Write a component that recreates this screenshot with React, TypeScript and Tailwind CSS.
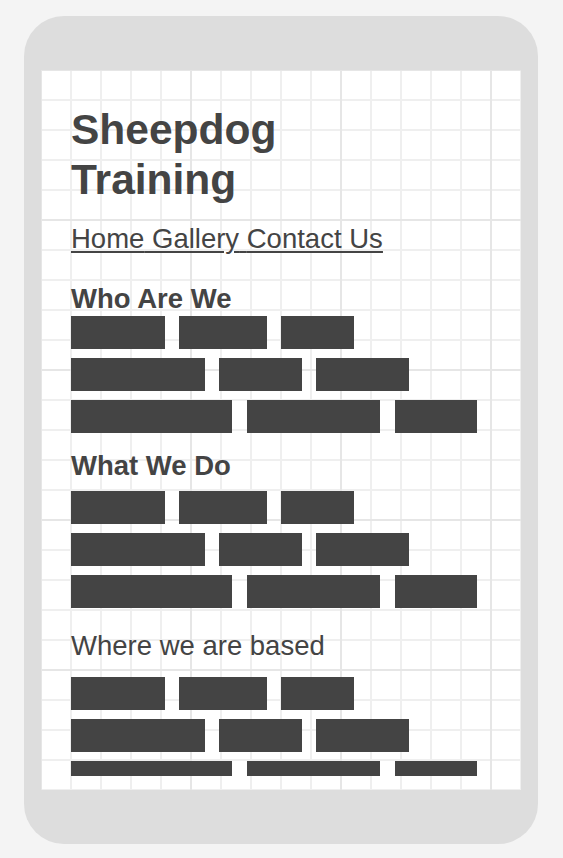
import React from 'react';

// widths of the placeholder "text" blocks, one array per line
const paragraph = [
  { widths: [94, 88, 73], gap: 'gap-[14px]' },
  { widths: [134, 83, 93], gap: 'gap-[14px]' },
  { widths: [161, 133, 82], gap: 'gap-[15px]' },
];

const Bars: React.FC<{ lastHeight?: number }> = ({ lastHeight }) => (
  <div className="flex flex-col gap-[9px]">
    {paragraph.map((row, i) => (
      <div key={i} className={`flex ${row.gap}`}>
        {row.widths.map((w, j) => (
          <div
            key={j}
            className="bg-[#444444]"
            style={{ width: w, height: i === 2 && lastHeight ? lastHeight : 33 }}
          />
        ))}
      </div>
    ))}
  </div>
);

const App: React.FC = () => {
  return (
    <div className="min-h-[858px] w-full bg-[#f4f4f4] pt-4 pl-6 font-['Liberation_Sans',Arial,sans-serif] text-[#444444]">
      <div className="w-[514px] h-[828px] rounded-[40px] bg-[#dddddd] px-[17px] py-[54px]">
        <div className="h-[720px] w-[480px] overflow-hidden bg-white bg-[linear-gradient(to_right,#e6e6e6_1px,transparent_1px,transparent_149px,#e6e6e6_149px),linear-gradient(to_bottom,#e6e6e6_1px,transparent_1px,transparent_149px,#e6e6e6_149px),linear-gradient(to_right,#efefef_1px,transparent_1px,transparent_29px,#efefef_29px),linear-gradient(to_bottom,#efefef_1px,transparent_1px,transparent_29px,#efefef_29px)] bg-[size:150px_150px,150px_150px,30px_30px,30px_30px] pl-[30px] pt-[35px]">
          <h1 className="text-[42.5px] leading-[50px] font-bold">
            Sheepdog
            <br />
            Training
          </h1>

          <nav className="mt-[18px] text-[27.5px] leading-[32px] underline underline-offset-[3px] decoration-2">
            <a href="#">Home</a> <a href="#">Gallery</a> <a href="#">Contact Us</a>
          </nav>

          <h2 className="mt-[29px] text-[27.5px] leading-[30px] font-bold">Who Are We</h2>
          <div className="mt-[2px]">
            <Bars />
          </div>

          <h2 className="mt-[18px] text-[27.5px] leading-[30px] font-bold">What We Do</h2>
          <div className="mt-[10px]">
            <Bars />
          </div>

          <h3 className="mt-[22px] text-[27.5px] leading-[32px]">Where we are based</h3>
          <div className="mt-[15px]">
            <Bars lastHeight={15} />
          </div>
        </div>
      </div>
    </div>
  );
};

export default App;
